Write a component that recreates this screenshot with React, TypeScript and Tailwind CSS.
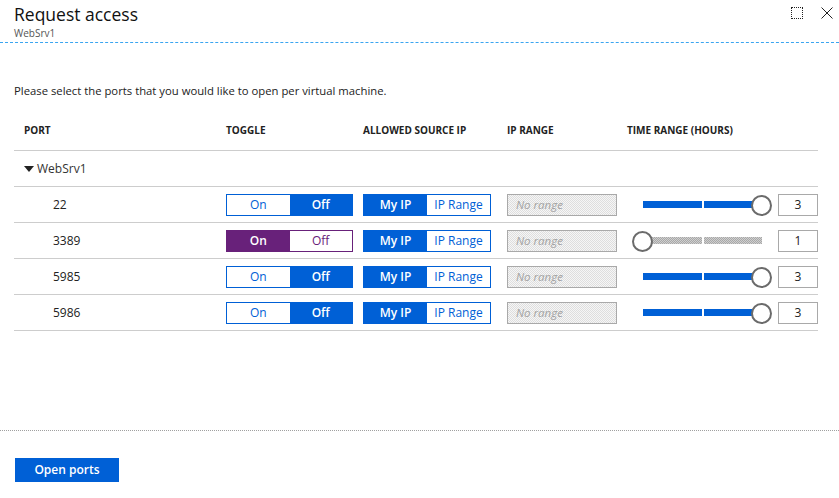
import React from 'react'

interface PortRow {
  port: string
  on: boolean
  hours: number
}

const rows: PortRow[] = [
  { port: '22', on: false, hours: 3 },
  { port: '3389', on: true, hours: 1 },
  { port: '5985', on: false, hours: 3 },
  { port: '5986', on: false, hours: 3 },
]

const cols = 'grid grid-cols-[212px_137px_144px_120px_1fr] items-center'

function Toggle({ on }: { on: boolean }) {
  if (on) {
    return (
      <div className="flex w-[127px] h-[22px] border border-[#68217a] text-[12px]">
        <div className="flex-1 flex items-center justify-center bg-[#68217a] text-white font-semibold">On</div>
        <div className="flex-1 flex items-center justify-center bg-white text-[#68217a]">Off</div>
      </div>
    )
  }
  return (
    <div className="flex w-[127px] h-[22px] border border-[#0060d6] text-[12px]">
      <div className="flex-1 flex items-center justify-center bg-white text-[#0060d6]">On</div>
      <div className="flex-1 flex items-center justify-center bg-[#0060d6] text-white font-semibold">Off</div>
    </div>
  )
}

function SourceIp() {
  return (
    <div className="flex w-[128px] h-[22px] border border-[#0060d6] text-[12px]">
      <div className="flex-1 flex items-center justify-center bg-[#0060d6] text-white font-semibold">My IP</div>
      <div className="flex-1 flex items-center justify-center bg-white text-[#0060d6]">IP Range</div>
    </div>
  )
}

function Slider({ hours }: { hours: number }) {
  const active = hours > 1
  const seg = active
    ? 'h-[7px] bg-[#0060d6]'
    : 'h-[7px] bg-[#b4b4b4] bg-[image:repeating-conic-gradient(#a8a8a8_0_25%,#cfcfcf_0_50%)] bg-[length:2px_2px]'
  return (
    <div className="relative w-[140px] h-[22px] flex items-center">
      <div className="flex gap-[2px] w-[119px] ml-[11px]">
        <div className={`flex-1 ${seg}`} />
        <div className={`flex-1 ${seg}`} />
      </div>
      <div
        className={`absolute top-[1px] w-[21px] h-[21px] rounded-full border-2 border-[#6b6b6b] bg-white ${
          active ? 'left-[119px]' : 'left-0'
        }`}
      />
    </div>
  )
}

export default function App() {
  return (
    <div className="w-[839px] h-[498px] bg-white flex flex-col text-[#1f1f1f] font-['Segoe_UI','Open_Sans',sans-serif] overflow-hidden">
      {/* Header */}
      <div className="relative h-[43px] border-b border-dashed border-[#3ba5f0] px-[14px] pt-[4px]">
        <h1 className="text-[17.5px] leading-[21px] text-[#111]">Request access</h1>
        <p className="text-[10px] leading-[12px] mt-[2px] text-[#555]">WebSrv1</p>
        <div className="absolute top-[7px] right-[6px] flex items-center gap-[18px]">
          <div className="w-[12px] h-[12px] border border-dotted border-[#222]" />
          <svg width="12" height="12" viewBox="0 0 12 12" fill="none" stroke="#222" strokeWidth="1">
            <path d="M0.5 0.5 L11.5 11.5 M11.5 0.5 L0.5 11.5" />
          </svg>
        </div>
      </div>

      {/* Body */}
      <div className="flex-1 px-[14px] pt-[40px]">
        <p className="text-[11.3px] leading-[16px] text-[#222]">
          Please select the ports that you would like to open per virtual machine.
        </p>

        <div className="w-[804px] mt-[12px]">
          <div className={`${cols} h-[40px] border-b border-[#cdcdcd] text-[10px] font-bold text-[#222]`}>
            <div className="pl-[10px]">PORT</div>
            <div>TOGGLE</div>
            <div>ALLOWED SOURCE IP</div>
            <div>IP RANGE</div>
            <div>TIME RANGE (HOURS)</div>
          </div>

          <div className="h-[36px] border-b border-[#cdcdcd] flex items-center pl-[10px] text-[12px] text-[#333]">
            <svg width="10" height="6" viewBox="0 0 10 6" className="mr-[3px]">
              <polygon points="0,0 10,0 5,6" fill="#222" />
            </svg>
            WebSrv1
          </div>

          {rows.map(r => (
            <div key={r.port} className={`${cols} h-[36px] border-b border-[#cdcdcd] text-[12px]`}>
              <div className="pl-[39px] text-[#222]">{r.port}</div>
              <div><Toggle on={r.on} /></div>
              <div><SourceIp /></div>
              <div>
                <div className="w-[110px] h-[22px] border border-[#a9a9a9] bg-[#ececec] bg-[image:repeating-conic-gradient(#dedede_0_25%,#f6f6f6_0_50%)] bg-[length:2px_2px] flex items-center pl-[8px] text-[11.5px] italic text-[#a3a3a3]">
                  No range
                </div>
              </div>
              <div className="flex items-center justify-end gap-[6px]">
                <Slider hours={r.hours} />
                <div className="w-[40px] h-[22px] border border-[#a9a9a9] flex items-center justify-center text-[12px] text-[#222]">
                  {r.hours}
                </div>
              </div>
            </div>
          ))}
        </div>
      </div>

      {/* Footer */}
      <div className="h-[68px] border-t border-dotted border-[#a0a0a0] px-[15px] pt-[25px]">
        <button className="w-[104px] h-[24px] bg-[#0060d6] text-white text-[12px] font-semibold">
          Open ports
        </button>
      </div>
    </div>
  )
}
